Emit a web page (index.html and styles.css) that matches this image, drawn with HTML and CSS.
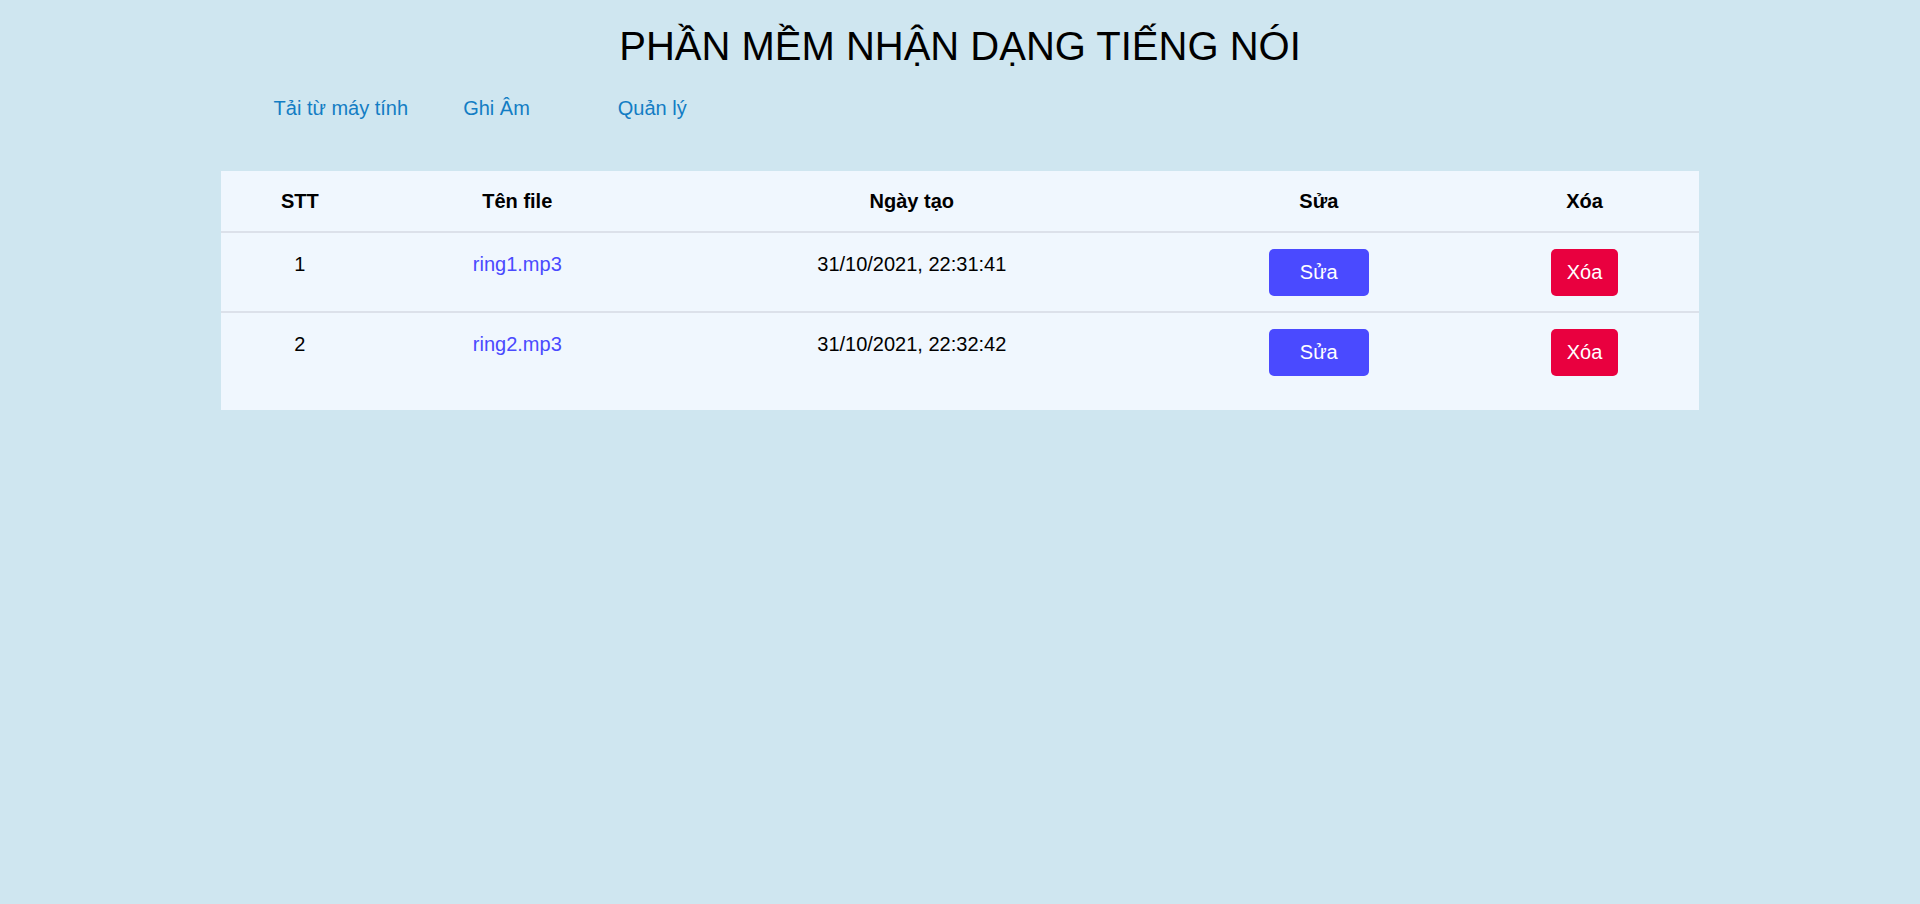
FILE: index.html
```html
<!DOCTYPE html>
<html lang="vi">
<head>
<meta charset="utf-8">
<title>Phần mềm nhận dạng tiếng nói</title>
<link rel="stylesheet" href="styles.css">
</head>
<body>
<header class="header">
  <h1 class="title">PHẦN MỀM NHẬN DẠNG TIẾNG NÓI</h1>
  <nav class="nav">
    <a class="nav-item" href="#">Tải từ máy tính</a>
    <a class="nav-item" href="#">Ghi Âm</a>
    <a class="nav-item" href="#">Quản lý</a>
  </nav>
</header>
<main class="card">
  <table class="files">
    <colgroup>
      <col class="c-stt">
      <col class="c-name">
      <col class="c-date">
      <col class="c-edit">
      <col class="c-del">
    </colgroup>
    <thead>
      <tr>
        <th>STT</th>
        <th>Tên file</th>
        <th>Ngày tạo</th>
        <th>Sửa</th>
        <th>Xóa</th>
      </tr>
    </thead>
    <tbody>
      <tr>
        <td>1</td>
        <td><a class="file-link" href="#">ring1.mp3</a></td>
        <td>31/10/2021, 22:31:41</td>
        <td class="action"><button class="btn btn-edit">Sửa</button></td>
        <td class="action"><button class="btn btn-del">Xóa</button></td>
      </tr>
      <tr>
        <td>2</td>
        <td><a class="file-link" href="#">ring2.mp3</a></td>
        <td>31/10/2021, 22:32:42</td>
        <td class="action"><button class="btn btn-edit">Sửa</button></td>
        <td class="action"><button class="btn btn-del">Xóa</button></td>
      </tr>
    </tbody>
  </table>
</main>
</body>
</html>
```

FILE: styles.css
```css
html, body {
  margin: 0;
  padding: 0;
}
body {
  background: #cfe6f0;
  font-family: "Liberation Sans", Arial, sans-serif;
  font-size: 20px;
  color: #000;
  min-height: 904px;
}
.header {
  padding-top: 23px;
}
.title {
  margin: 0;
  font-size: 40px;
  line-height: 46px;
  font-weight: normal;
  text-align: center;
}
.nav {
  display: flex;
  margin-top: 28px;
  padding-left: 263px;
  line-height: 23px;
}
.nav-item {
  width: 155.7px;
  text-align: center;
  color: #137dc4;
  text-decoration: none;
}
.card {
  width: 77%;
  margin: 51px auto 0;
  background: #f0f7fe;
  padding-bottom: 19px;
}
.files {
  width: 100%;
  border-collapse: collapse;
  table-layout: fixed;
}
.c-stt { width: 158px; }
.c-name { width: 277px; }
.c-date { width: 512px; }
.c-edit { width: 302px; }
.files th {
  padding: 19px 0 18px;
  line-height: 23px;
  font-weight: bold;
  text-align: center;
  border-bottom: 2px solid #dce1ea;
}
.files td {
  padding: 20px 0 0;
  line-height: 23px;
  text-align: center;
  vertical-align: top;
}
.files tbody tr + tr {
  border-top: 2px solid #dce1ea;
}
.files td.action {
  padding: 16px 0 15px;
}
.file-link {
  color: #4a4aff;
  text-decoration: none;
}
.btn {
  display: inline-block;
  height: 47px;
  border: none;
  border-radius: 5px;
  color: #fff;
  font-family: "Liberation Sans", Arial, sans-serif;
  font-size: 20px;
  line-height: 23px;
  padding: 0 16px;
  cursor: pointer;
  vertical-align: top;
}
.btn-edit {
  width: 100px;
  background: #4a4aff;
}
.btn-del {
  background: #e9003f;
}
```
